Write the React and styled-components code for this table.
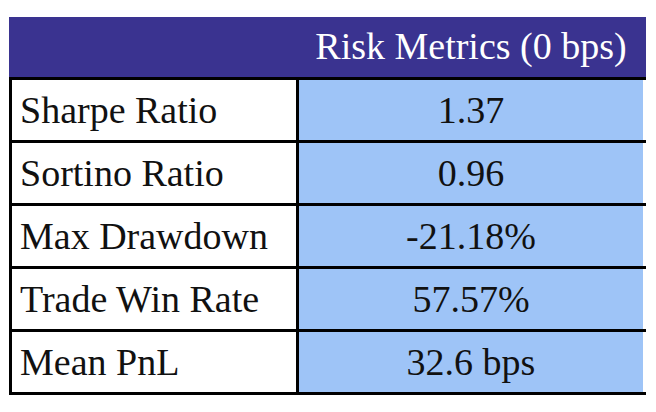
import React from "react";
import styled, { createGlobalStyle } from "styled-components";

const GlobalStyle = createGlobalStyle`
    body {
        margin: 0;
        background: #fff;
        font-family: "Liberation Serif", "Times New Roman", serif;
    }
`

const Page = styled.div`
    padding: 17px 0 0 9px;
`
const Table = styled.div`
    width: 637px;
    display: flex;
    flex-direction: column;
`
const Header = styled.div`
    display: grid;
    grid-template-columns: 290px 344px;
    height: 60px;
    background: #3a3390;
    color: #fff;
    border-bottom: 3px solid #000;
`
const HeaderTitle = styled.div`
    display: flex;
    align-items: center;
    justify-content: center;
    font-size: 38px;
    padding-bottom: 2px;
`
const Row = styled.div`
    display: grid;
    grid-template-columns: 290px 344px 3px;
    height: 60px;
    border-bottom: 3px solid #000;
`
const Label = styled.div`
    display: flex;
    align-items: center;
    background: #fff;
    border-left: 3px solid #000;
    border-right: 3px solid #000;
    padding-left: 8px;
    font-size: 38px;
    color: #111;
`
const Value = styled.div`
    display: flex;
    align-items: center;
    justify-content: center;
    background: #9ec4f7;
    font-size: 38px;
    color: #111;
`

const metrics = [
    ["Sharpe Ratio", "1.37"],
    ["Sortino Ratio", "0.96"],
    ["Max Drawdown", "-21.18%"],
    ["Trade Win Rate", "57.57%"],
    ["Mean PnL", "32.6 bps"],
]

const App = () => {
    return (
        <Page>
            <GlobalStyle />
            <Table>
                <Header>
                    <div />
                    <HeaderTitle>Risk Metrics (0 bps)</HeaderTitle>
                </Header>
                {metrics.map(([label, value]) => (
                    <Row key={label}>
                        <Label>{label}</Label>
                        <Value>{value}</Value>
                        <div />
                    </Row>
                ))}
            </Table>
        </Page>
    )
}

export default App;
